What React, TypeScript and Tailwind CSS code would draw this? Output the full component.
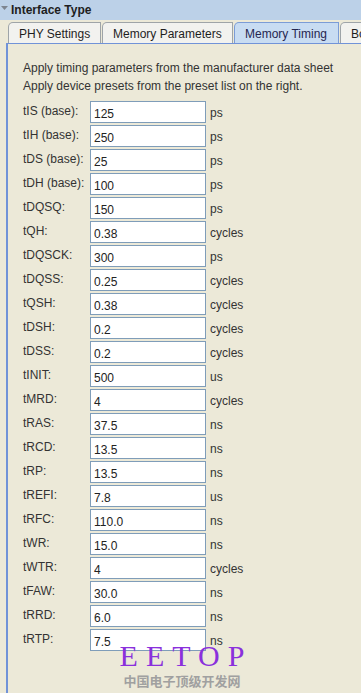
import React from 'react'

const ROWS: [string, string, string][] = [
  ['tIS (base):', '125', 'ps'],
  ['tIH (base):', '250', 'ps'],
  ['tDS (base):', '25', 'ps'],
  ['tDH (base):', '100', 'ps'],
  ['tDQSQ:', '150', 'ps'],
  ['tQH:', '0.38', 'cycles'],
  ['tDQSCK:', '300', 'ps'],
  ['tDQSS:', '0.25', 'cycles'],
  ['tQSH:', '0.38', 'cycles'],
  ['tDSH:', '0.2', 'cycles'],
  ['tDSS:', '0.2', 'cycles'],
  ['tINIT:', '500', 'us'],
  ['tMRD:', '4', 'cycles'],
  ['tRAS:', '37.5', 'ns'],
  ['tRCD:', '13.5', 'ns'],
  ['tRP:', '13.5', 'ns'],
  ['tREFI:', '7.8', 'us'],
  ['tRFC:', '110.0', 'ns'],
  ['tWR:', '15.0', 'ns'],
  ['tWTR:', '4', 'cycles'],
  ['tFAW:', '30.0', 'ns'],
  ['tRRD:', '6.0', 'ns'],
  ['tRTP:', '7.5', 'ns'],
]

const TABS = [
  { label: 'PHY Settings', w: 'w-[93px]' },
  { label: 'Memory Parameters', w: 'w-[131px]' },
  { label: 'Memory Timing', w: 'w-[105px]', active: true },
  { label: 'Board Settings', w: 'w-[90px]' },
]

export default function App() {
  return (
    <div
      className="relative w-[361px] h-[693px] overflow-hidden bg-[#ece9d8] text-[12px] text-[#2b2b2b]"
      style={{ fontFamily: '"Liberation Sans", Arial, sans-serif' }}
    >
      {/* section header */}
      <div className="h-[20px] bg-[#bcd1e8] flex items-center">
        <svg width="9" height="6" viewBox="0 0 9 6" className="ml-[1px] mt-[-2px]">
          <polygon points="0,0 7,0 3.5,4" fill="#7d8590" />
        </svg>
        <span className="ml-[1px] font-bold text-[12px] text-[#1e1e1e]">Interface Type</span>
      </div>

      {/* tabs */}
      <div className="flex gap-[1px] pl-[8px] mt-[2px] h-[21px] whitespace-nowrap">
        {TABS.map((t) => (
          <div
            key={t.label}
            className={`${t.w} shrink-0 h-[21px] pl-[10px] pt-[2px] border border-b-0 rounded-tl-[5px] ${
              t.active
                ? 'bg-[#c8dcf2] border-[#7b9cd6] text-[#262650]'
                : 'bg-[#f2f2ef] border-[#9ea4a8] text-[#1e1e1e]'
            }`}
          >
            {t.label}
          </div>
        ))}
      </div>

      {/* tab panel */}
      <div className="ml-[6px] border-l-2 border-t border-[#7193d8] h-[700px] pl-[15px] pt-[15px]">
        <div className="leading-[18px] text-[#333]">
          <div>Apply timing parameters from the manufacturer data sheet</div>
          <div>Apply device presets from the preset list on the right.</div>
        </div>

        <div className="mt-[6px] flex flex-col gap-[2px]">
          {ROWS.map(([label, value, unit]) => (
            <div key={label} className="flex items-center h-[22px]">
              <div className="w-[67px] mt-[-3px] text-[#333]">{label}</div>
              <div className="w-[116px] h-[22px] bg-white border border-[#7f9db9] pl-[3px] pt-[3px] text-[#222]">
                {value}
              </div>
              <div className="ml-[4px] mt-[1px] text-[#333]">{unit}</div>
            </div>
          ))}
        </div>
      </div>

      {/* watermark overlay */}
      <div className="absolute left-[112px] top-[639px] w-[140px] pointer-events-none flex flex-col items-center">
        <div
          className="text-[30px] leading-[33px] tracking-[8px] text-[#8a30dc] pl-[8px]"
          style={{ fontFamily: '"Liberation Serif", "Times New Roman", serif' }}
        >
          EETOP
        </div>
        <div
          className="mt-[1px] text-[13px] leading-[16px] font-bold text-[#a0a0a0]"
          style={{ fontFamily: '"Noto Sans CJK SC", sans-serif' }}
        >
          中国电子顶级开发网
        </div>
      </div>
    </div>
  )
}
